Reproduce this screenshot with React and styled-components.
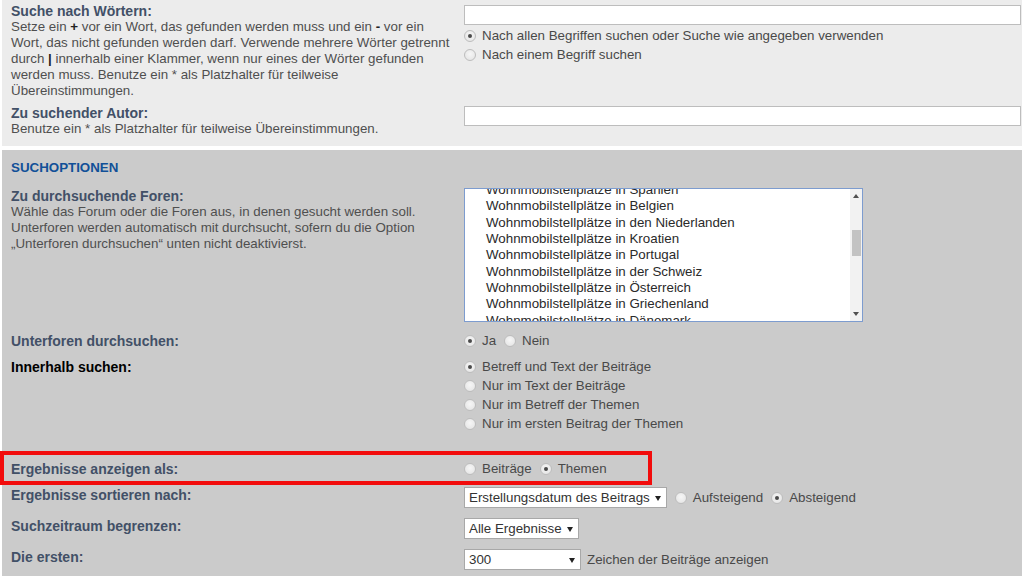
import React from "react";
import styled, { createGlobalStyle } from "styled-components";

const GlobalStyle = createGlobalStyle`
  html, body { margin: 0; padding: 0; background: #ffffff; }
  body {
    font-family: "Liberation Sans", Arial, Helvetica, sans-serif;
    font-size: 13.33px;
    color: #4c4c4c;
  }
`;

const Page = styled.div`
  width: 1024px;
  height: 576px;
  overflow: hidden;
  display: flex;
  flex-direction: column;
  gap: 4px;
`;

const Panel = styled.section`
  margin: 0 2px;
  background: ${(p) => p.$bg};
  padding: ${(p) => p.$pad};
  display: flex;
  flex-direction: column;
  gap: ${(p) => p.$gap}px;
  flex: ${(p) => (p.$grow ? 1 : "none")};
`;

const Heading = styled.h3`
  margin: 0 0 2px;
  font-size: 13.33px;
  line-height: 16px;
  font-weight: bold;
  text-transform: uppercase;
  color: #115098;
`;

const Row = styled.div`
  position: relative;
  display: grid;
  grid-template-columns: 453px 1fr;
  align-items: start;
  margin-bottom: ${(p) => p.$mb ?? 0}px;
`;

const LabelCol = styled.div`
  display: flex;
  flex-direction: column;
  line-height: 16px;
`;

const Label = styled.label`
  font-size: 14px;
  font-weight: bold;
  color: ${(p) => (p.$dark ? "#000000" : "#425067")};
`;

const Explain = styled.span`
  color: #4f4f4f;
  white-space: nowrap;
  b { color: #222; }
`;

const FieldCol = styled.div`
  display: flex;
  flex-direction: ${(p) => (p.$inline ? "row" : "column")};
  align-items: ${(p) => (p.$inline ? "center" : "flex-start")};
  gap: ${(p) => p.$gap ?? 3}px;
  padding-top: ${(p) => p.$pt ?? 0}px;
`;

const TextInput = styled.div`
  box-sizing: border-box;
  width: 100%;
  height: 20px;
  background: #ffffff;
  border: 1px solid #bdbdbd;
  margin-bottom: ${(p) => p.$mb ?? 0}px;
`;

const RadioItem = styled.span`
  display: inline-flex;
  align-items: center;
  gap: 6px;
  height: 16px;
  line-height: 16px;
  color: #494949;
  white-space: nowrap;
`;

const RadioCircle = styled.span`
  box-sizing: border-box;
  width: 12px;
  height: 12px;
  border-radius: 50%;
  border: 1px solid #bdbdbd;
  background: radial-gradient(circle at 50% 40%, #f6f6f6 0%, #e2e2e2 100%);
  display: inline-flex;
  align-items: center;
  justify-content: center;
  flex: none;
  &::after {
    content: "";
    width: 4px;
    height: 4px;
    border-radius: 50%;
    background: ${(p) => (p.$checked ? "#4a4a4a" : "transparent")};
  }
`;

const Radio = ({ checked, children }) => (
  <RadioItem>
    <RadioCircle $checked={checked} />
    {children}
  </RadioItem>
);

const Listbox = styled.div`
  box-sizing: border-box;
  width: 399px;
  height: 134px;
  background: #ffffff;
  border: 1px solid #7d9ccf;
  display: flex;
  overflow: hidden;
`;

const OptionList = styled.ul`
  list-style: none;
  margin: ${(p) => -p.$scroll}px 0 0;
  padding: 0;
  flex: 1;
`;

const Option = styled.li`
  height: 16.33px;
  line-height: 16.33px;
  padding-left: 21px;
  color: #2a2a2a;
  white-space: nowrap;
`;

const Scrollbar = styled.div`
  width: 12px;
  background: #f2f2f2;
  display: flex;
  flex-direction: column;
  align-items: center;
`;

const ScrollArrow = styled.span`
  height: 14px;
  display: flex;
  align-items: center;
  justify-content: center;
  &::before {
    content: "";
    border-left: 3px solid transparent;
    border-right: 3px solid transparent;
    ${(p) =>
      p.$up
        ? "border-bottom: 4px solid #505050;"
        : "border-top: 4px solid #505050;"}
  }
`;

const ScrollTrack = styled.div`
  flex: 1;
  width: 100%;
  display: flex;
  justify-content: center;
`;

const Thumb = styled.div`
  width: 9px;
  height: 26px;
  margin-top: ${(p) => p.$offset}px;
  background: #c3c3c3;
`;

const Select = styled.span`
  box-sizing: border-box;
  display: inline-flex;
  align-items: center;
  justify-content: space-between;
  gap: 5px;
  height: 21px;
  width: ${(p) => (p.$width ? `${p.$width}px` : "auto")};
  padding: 0 5px 0 4px;
  background: #ffffff;
  border: 1px solid #a8a8a8;
  color: #333333;
  white-space: nowrap;
  &::after {
    content: "";
    border-left: 3px solid transparent;
    border-right: 3px solid transparent;
    border-top: 5px solid #222222;
    margin-top: 1px;
  }
`;

const Divider = styled.div`
  height: 9px;
`;

const Highlight = styled.div`
  position: absolute;
  left: -11px;
  top: -10px;
  width: 652px;
  height: 34px;
  box-sizing: border-box;
  border: 4px solid #f20c0c;
  pointer-events: none;
`;

const TailText = styled.span`
  color: #494949;
  line-height: 16px;
  white-space: nowrap;
`;

const forums = [
  "Wohnmobilstellplätze in Spanien",
  "Wohnmobilstellplätze in Belgien",
  "Wohnmobilstellplätze in den Niederlanden",
  "Wohnmobilstellplätze in Kroatien",
  "Wohnmobilstellplätze in Portugal",
  "Wohnmobilstellplätze in der Schweiz",
  "Wohnmobilstellplätze in Österreich",
  "Wohnmobilstellplätze in Griechenland",
  "Wohnmobilstellplätze in Dänemark",
];

export default function App() {
  return (
    <>
      <GlobalStyle />
      <Page>
        <Panel $bg="#ececec" $pad="3px 1px 9px 9px" $gap={6}>
          <Row>
            <LabelCol>
              <Label>Suche nach Wörtern:</Label>
              <Explain>
                Setze ein <b>+</b> vor ein Wort, das gefunden werden muss und ein <b>-</b> vor ein
                <br />
                Wort, das nicht gefunden werden darf. Verwende mehrere Wörter getrennt
                <br />
                durch <b>|</b> innerhalb einer Klammer, wenn nur eines der Wörter gefunden
                <br />
                werden muss. Benutze ein * als Platzhalter für teilweise
                <br />
                Übereinstimmungen.
              </Explain>
            </LabelCol>
            <FieldCol $pt={2}>
              <TextInput $mb={0} />
              <Radio checked>Nach allen Begriffen suchen oder Suche wie angegeben verwenden</Radio>
              <Radio>Nach einem Begriff suchen</Radio>
            </FieldCol>
          </Row>
          <Row>
            <LabelCol>
              <Label>Zu suchender Autor:</Label>
              <Explain>Benutze ein * als Platzhalter für teilweise Übereinstimmungen.</Explain>
            </LabelCol>
            <FieldCol $pt={1}>
              <TextInput />
            </FieldCol>
          </Row>
        </Panel>

        <Panel $bg="#cbcbcb" $pad="10px 1px 0 9px" $gap={10} $grow>
          <Heading>Suchoptionen</Heading>
          <Row $mb={1}>
            <LabelCol>
              <Label>Zu durchsuchende Foren:</Label>
              <Explain>
                Wähle das Forum oder die Foren aus, in denen gesucht werden soll.
                <br />
                Unterforen werden automatisch mit durchsucht, sofern du die Option
                <br />
                „Unterforen durchsuchen“ unten nicht deaktivierst.
              </Explain>
            </LabelCol>
            <FieldCol>
              <Listbox>
                <OptionList $scroll={7}>
                  {forums.map((f) => (
                    <Option key={f}>{f}</Option>
                  ))}
                </OptionList>
                <Scrollbar>
                  <ScrollArrow $up />
                  <ScrollTrack>
                    <Thumb $offset={27} />
                  </ScrollTrack>
                  <ScrollArrow />
                </Scrollbar>
              </Listbox>
            </FieldCol>
          </Row>
          <Row>
            <LabelCol>
              <Label>Unterforen durchsuchen:</Label>
            </LabelCol>
            <FieldCol $inline $gap={8}>
              <Radio checked>Ja</Radio>
              <Radio>Nein</Radio>
            </FieldCol>
          </Row>
          <Row>
            <LabelCol>
              <Label $dark>Innerhalb suchen:</Label>
            </LabelCol>
            <FieldCol>
              <Radio checked>Betreff und Text der Beiträge</Radio>
              <Radio>Nur im Text der Beiträge</Radio>
              <Radio>Nur im Betreff der Themen</Radio>
              <Radio>Nur im ersten Beitrag der Themen</Radio>
            </FieldCol>
          </Row>
          <Divider />
          <Row>
            <Highlight />
            <LabelCol>
              <Label>Ergebnisse anzeigen als:</Label>
            </LabelCol>
            <FieldCol $inline $gap={8}>
              <Radio>Beiträge</Radio>
              <Radio checked>Themen</Radio>
            </FieldCol>
          </Row>
          <Row>
            <LabelCol>
              <Label>Ergebnisse sortieren nach:</Label>
            </LabelCol>
            <FieldCol $inline $gap={8}>
              <Select>Erstellungsdatum des Beitrags</Select>
              <Radio>Aufsteigend</Radio>
              <Radio checked>Absteigend</Radio>
            </FieldCol>
          </Row>
          <Row>
            <LabelCol>
              <Label>Suchzeitraum begrenzen:</Label>
            </LabelCol>
            <FieldCol $inline>
              <Select>Alle Ergebnisse</Select>
            </FieldCol>
          </Row>
          <Row>
            <LabelCol>
              <Label>Die ersten:</Label>
            </LabelCol>
            <FieldCol $inline $gap={6}>
              <Select $width={117}>300</Select>
              <TailText>Zeichen der Beiträge anzeigen</TailText>
            </FieldCol>
          </Row>
        </Panel>
      </Page>
    </>
  );
}
